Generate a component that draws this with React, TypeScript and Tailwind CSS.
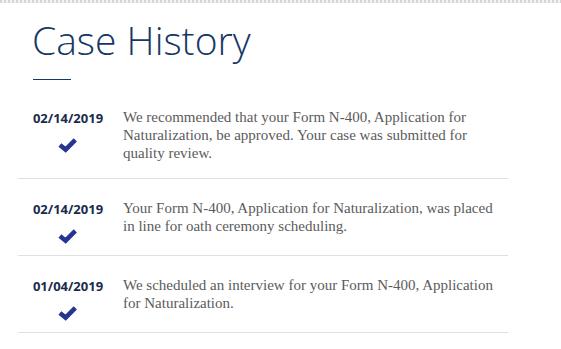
import React from "react";

const Check = () => (
  <svg width="20" height="16" viewBox="0 0 20 16" className="block" aria-hidden="true">
    <polyline
      points="1.9,7.0 7.6,11.6 17.3,1.8"
      fill="none"
      stroke="#26358f"
      strokeWidth="4.6"
      strokeLinecap="butt"
      strokeLinejoin="miter"
    />
  </svg>
);

const items = [
  {
    date: "02/14/2019",
    text: "We recommended that your Form N-400, Application for Naturalization, be approved. Your case was submitted for quality review.",
  },
  {
    date: "02/14/2019",
    text: "Your Form N-400, Application for Naturalization, was placed in line for oath ceremony scheduling.",
  },
  {
    date: "01/04/2019",
    text: "We scheduled an interview for your Form N-400, Application for Naturalization.",
  },
];

export default function App() {
  return (
    <div className="w-[561px] h-[349px] bg-white overflow-hidden">
      <div className="h-[3px] bg-[repeating-linear-gradient(90deg,#d6d6d6_0_2px,#f2f2f2_2px_4px)]" />
      <div className="pl-[32px]">
        <h1
          className="mt-[13px] text-[39px] leading-[48px] font-light text-[#163865]"
          style={{ fontFamily: '"Open Sans", sans-serif' }}
        >
          Case History
        </h1>
        <div className="mt-[15px] ml-[1px] w-[38px] h-[1px] bg-[#163865]" />
      </div>
      <div className="mt-[8px] ml-[18px] w-[490px]">
        {items.map((it, i) => (
          <div
            key={i}
            className={`flex items-start pt-[20px] ${i > 0 ? "border-t border-[#e0e0e0]" : ""} ${i === items.length - 1 ? "border-b border-[#e0e0e0]" : ""}`}
          >
            <div className="w-[100px] flex flex-col items-center pb-[10px]">
              <div
                className="text-[13px] leading-[20px] font-bold text-[#1a2b4c]"
                style={{ fontFamily: '"Open Sans", sans-serif' }}
              >
                {it.date}
              </div>
              <div className="mt-[10px]">
                <Check />
              </div>
            </div>
            <p
              className="ml-[5px] w-[380px] pb-[16px] text-[15px] leading-[18px] text-[#5b5b5b]"
              style={{ fontFamily: '"Liberation Serif", serif' }}
            >
              {it.text}
            </p>
          </div>
        ))}
      </div>
    </div>
  );
}
